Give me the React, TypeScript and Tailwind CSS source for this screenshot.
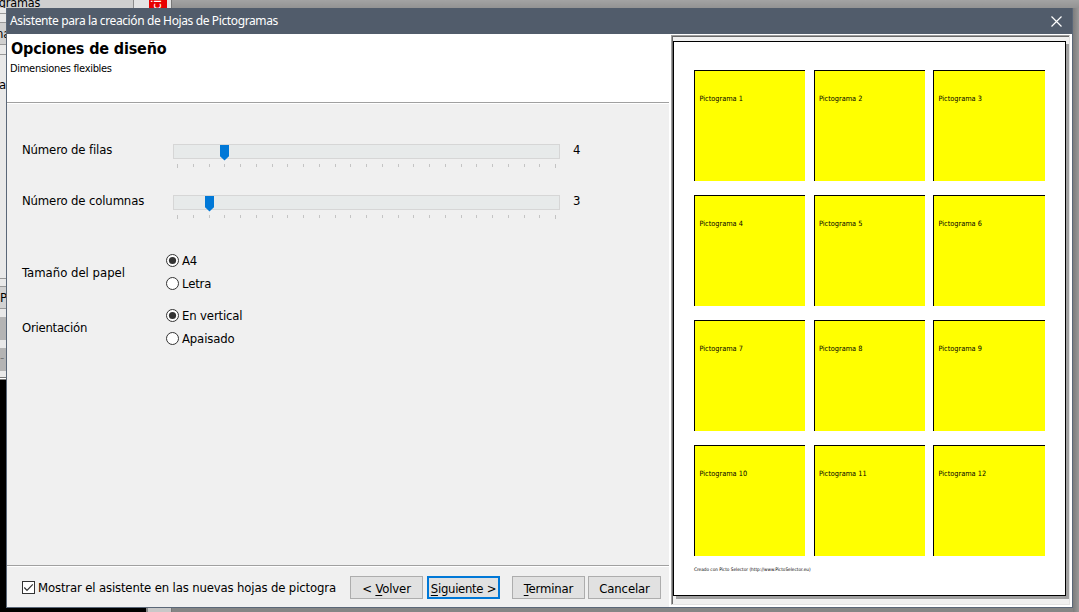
import React from "react";

const ui = "font-['DejaVu_Sans_Condensed','DejaVu_Sans',sans-serif] [font-stretch:condensed]";

function Slider({ value }: { value: number }) {
  return (
    <svg width="387" height="25" viewBox="0 0 387 25" shapeRendering="crispEdges" className="block">
      <rect x="0.5" y="0.5" width="386" height="14" fill="#e7eaea" stroke="#d6d6d6" />
      {Array.from({ length: 25 }, (_, i) => (
        <rect key={i} x={Math.round(4 + i * 15.75)} y="20" width="1" height={i === 0 || i === 24 ? 4 : 3} fill="#c4c4c4" />
      ))}
      <path
        transform={`translate(${Math.round(value * 15.75)} 1)`}
        shapeRendering="auto"
        d="M0 0H9V11.3L4.5 15.4L0 11.3Z"
        fill="#0078d7"
      />
    </svg>
  );
}

function SliderRow({ label, value, shown }: { label: string; value: number; shown: string }) {
  return (
    <div className="flex h-[51px] items-start">
      <span className="w-[151px] leading-[11px]">{label}</span>
      <Slider value={value} />
      <span className="ml-[13px] leading-[11px]">{shown}</span>
    </div>
  );
}

function Radio({ label, on = false }: { label: string; on?: boolean }) {
  return (
    <div className="flex h-[23px] items-center">
      <svg width="13" height="13" viewBox="0 0 13 13" className="mr-[3px]">
        <circle cx="6.5" cy="6.5" r="6" fill="#fff" stroke="#333" />
        {on && <circle cx="6.5" cy="6.5" r="3.6" fill="#333" />}
      </svg>
      <span>{label}</span>
    </div>
  );
}

function Button({ children, focus = false, className = "" }: { children: React.ReactNode; focus?: boolean; className?: string }) {
  return (
    <button
      className={`flex h-[23px] w-[73px] shrink-0 justify-center whitespace-nowrap bg-[#e1e1e1] ${
        focus ? "border-2 border-[#0078d7] leading-[21px]" : "border border-[#adadad] leading-[23px]"
      } ${className}`}
    >
      <span>{children}</span>
    </button>
  );
}

function Key({ children }: { children: string }) {
  return <span className="underline decoration-1 underline-offset-2">{children}</span>;
}

function Card({ n }: { n: number }) {
  return (
    <div className="h-[111px] border-l border-t border-black bg-[#ff0] pl-[4.5px] pt-[23px] text-[7.3px] leading-[10px] tracking-normal">
      Pictograma {n}
    </div>
  );
}

function Backdrop() {
  return (
    <div className="flex h-[612px] w-[1079px] overflow-hidden bg-[#989898]">
      <div className="relative h-[612px] w-[171px] shrink-0 bg-black">
        <div className="flex h-[8px] overflow-hidden bg-[#e3e3e3]">
          <div className="w-[134px] shrink-0 border-r border-[#8c8c8c] bg-[#cfcfcf] text-[12.5px] leading-[6px]">
            <span className="-ml-[8px]">ogramas</span>
          </div>
          <div className="ml-[15px] h-[8px] w-[18px] overflow-hidden bg-[#e80000] text-white">
            <span className="-mt-[7px] block rotate-180 text-[13px] leading-[16px] [writing-mode:vertical-rl]">cio</span>
          </div>
        </div>
        <div className="flex h-[372px] w-[7px] flex-col overflow-hidden bg-[#e9e9e9]">
          <div className="h-[6px] shrink-0 border-b border-[#999]" />
          <div className="h-[9px] shrink-0 border-b border-[#999]" />
          <div className="h-[22px] shrink-0 border-b border-[#999] bg-[#d0d0d0] leading-[21px]">
            <span className="-ml-[4px]">na</span>
          </div>
          <div className="h-[10px] shrink-0 border-b border-[#999]" />
          <div className="h-[224px] shrink-0 border-b border-[#999] pt-[21px] leading-[17px]">
            <span className="-ml-[1px]">a</span>
          </div>
          <div className="h-[8px] shrink-0 border-b border-[#999]" />
          <div className="h-[22px] shrink-0 border-b border-[#999] bg-[#d2d2d2] leading-[22px]">P</div>
          <div className="mt-[8px] h-[23px] shrink-0 bg-[#b4b4b4]" />
          <div className="mt-[8px] h-[23px] shrink-0 bg-[#b4b4b4] text-[#777]">-</div>
          <div className="mt-[6px] h-[3px] shrink-0 border-y border-[#777] bg-white" />
        </div>
      </div>
      <div className="flex flex-1 flex-col justify-between border-l border-[#777] bg-gradient-to-l from-[#999] to-[#949494]">
        <div className="h-[8px] bg-gradient-to-b from-[#a3a3a3] to-[#939393]" />
        <div className="h-[4px] bg-[#858585]" />
      </div>
    </div>
  );
}

export default function App() {
  return (
    <div className={`relative h-[612px] w-[1079px] overflow-hidden text-[13px] tracking-[-0.15px] text-black ${ui}`}>
      <Backdrop />
      <div className="absolute bottom-0 left-[146px] h-[4px] w-[25px] border-l-2 border-[#888] bg-[#c8c8c8]" />
      <div className="absolute bottom-0 right-0 top-[8px] w-[6px] bg-gradient-to-r from-[#7d7d7d] to-[#999]" />

      <div className="absolute left-[6px] top-[8px] flex h-[600px] w-[1067px] flex-col border border-t-0 border-[#5a6778] bg-[#f0f0f0]">
        <header className="flex h-[26px] shrink-0 items-center justify-between bg-[#515c6b] pl-[3px] pr-[10px] font-['Noto_Sans',sans-serif] text-[12px] tracking-[-0.38px] text-white">
          <span className="whitespace-nowrap">Asistente para la creación de Hojas de Pictogramas</span>
          <svg width="11" height="11" viewBox="0 0 11 11" stroke="#fff" strokeWidth="1.2">
            <path d="M0.5 0.5L10.5 10.5M10.5 0.5L0.5 10.5" />
          </svg>
        </header>

        <div className="flex flex-1 items-stretch">
          <main className="flex w-[664px] shrink-0 flex-col border-r-2 border-white">
            <div className="h-[68px] shrink-0 bg-white pl-[4px] pt-[6px]">
              <h1 className="text-[16px] font-bold leading-[18px]">Opciones de diseño</h1>
              <p className="-ml-px mt-[4px] text-[11px] leading-[14px] tracking-[-0.3px]">Dimensiones flexibles</p>
            </div>
            <div className="h-[2px] shrink-0 border-b border-t border-b-white border-t-[#a0a0a0]" />
            <div className="flex-1 pl-[15px] pt-[40px]">
              <SliderRow label="Número de filas" value={3} shown="4" />
              <SliderRow label="Número de columnas" value={2} shown="3" />
              <div className="mt-[3px] flex items-center">
                <span className="w-[144px] pt-[2px] tracking-normal">Tamaño del papel</span>
                <div>
                  <Radio label="A4" on />
                  <Radio label="Letra" />
                </div>
              </div>
              <div className="mt-[9px] flex items-center">
                <span className="w-[144px] pt-[2px] tracking-[-0.25px]">Orientación</span>
                <div>
                  <Radio label="En vertical" on />
                  <Radio label="Apaisado" />
                </div>
              </div>
            </div>
            <div className="h-[2px] shrink-0 border-b border-t border-b-white border-t-[#a0a0a0]" />
            <footer className="flex h-[40px] shrink-0 items-start pl-[15px] pt-[9px]">
              <div className="flex h-[23px] w-[328px] shrink-0 items-center whitespace-nowrap">
                <svg width="13" height="13" viewBox="0 0 13 13" fill="none" className="mr-[3px] shrink-0">
                  <rect x="0.5" y="0.5" width="12" height="12" fill="#fff" stroke="#333" />
                  <path d="M2.3 6.5L5 9.3L10.8 3.3" stroke="#333" strokeWidth="1.2" />
                </svg>
                Mostrar el asistente en las nuevas hojas de pictogra
              </div>
              <Button>&lt; <Key>V</Key>olver</Button>
              <Button focus className="ml-[4px] tracking-[-0.3px]"><Key>S</Key>iguiente &gt;</Button>
              <Button className="ml-[12px]"><Key>T</Key>erminar</Button>
              <Button className="ml-[3px]">Cancelar</Button>
            </footer>
          </main>

          <aside className="flex flex-1 flex-col border-b-2 border-r-2 border-t border-white">
            <div className="flex-1 border border-b-[#e3e3e3] border-l-[#a0a0a0] border-r-[#e3e3e3] border-t-[#a0a0a0]">
              <div className="h-full border-l border-t border-[#696969] pt-[4px]">
                <div className="flex h-[555px] w-[393px] flex-col border border-black bg-white pl-[20px] pt-[28px] shadow-[3px_3px_0_#a0a0a0]">
                  <div className="grid grid-cols-[111px_111px_112px] gap-y-[14px] [column-gap:8.5px]">
                    {Array.from({ length: 12 }, (_, i) => (
                      <Card key={i} n={i + 1} />
                    ))}
                  </div>
                  <div className="mt-[11px] whitespace-nowrap text-[4.7px] leading-[6px] tracking-normal">
                    Creado con Picto Selector (http://www.PictoSelector.eu)
                  </div>
                </div>
              </div>
            </div>
          </aside>
        </div>
      </div>
    </div>
  );
}
